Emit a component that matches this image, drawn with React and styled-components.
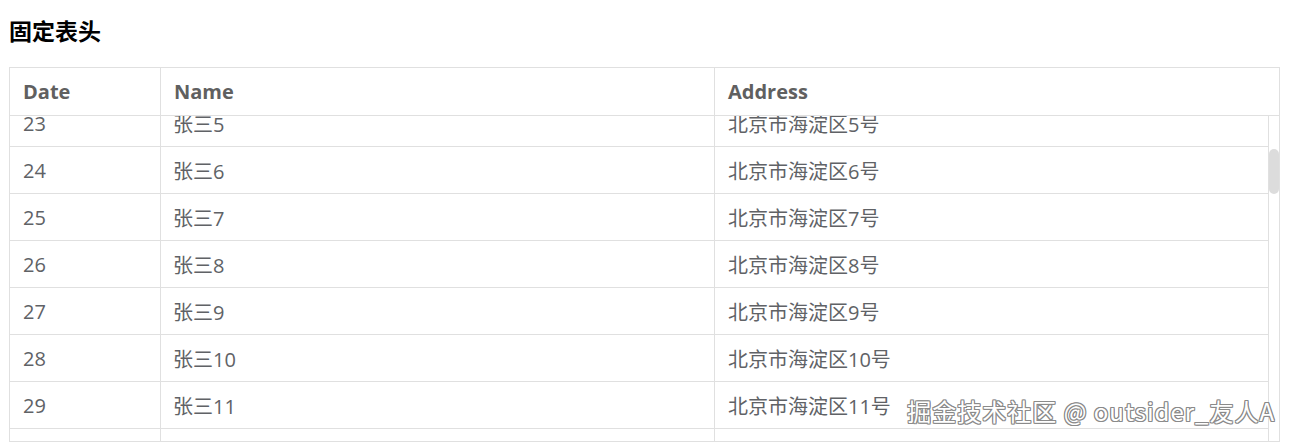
import styled, { createGlobalStyle } from "styled-components";
import { useLayoutEffect, useRef } from "react";

const GlobalStyle = createGlobalStyle`
  body {
    margin: 0;
    background: #fff;
    font-family: "Open Sans", "Noto Sans CJK SC", sans-serif;
  }
`;

const rows = Array.from({ length: 50 }, (_, i) => ({
  date: 18 + i,
  name: `张三${i}`,
  address: `北京市海淀区${i}号`,
}));

const App = () => {
  let bodyRef = useRef(null);

  // start the list scrolled a bit, like in the screenshot
  useLayoutEffect(() => {
    if (bodyRef.current) bodyRef.current.scrollTop = 251;
  }, []);

  return (
    <Page>
      <GlobalStyle />
      <Title>固定表头</Title>
      <Table>
        <HeadRow>
          <HeadCell $w="151px">Date</HeadCell>
          <HeadCell $w="554px">Name</HeadCell>
          <HeadCell $last>Address</HeadCell>
        </HeadRow>
        <BodyWrap>
          <Body ref={bodyRef}>
            {rows.map((r) => (
              <Row key={r.date}>
                <Cell $w="151px">{r.date}</Cell>
                <Cell $w="554px">{r.name}</Cell>
                <Cell $last>{r.address}</Cell>
              </Row>
            ))}
          </Body>
          <Gutter>
            <Thumb />
          </Gutter>
        </BodyWrap>
      </Table>
      <Watermark>掘金技术社区 @ outsider_友人A</Watermark>
    </Page>
  );
};

export default App;

let Page = styled.div`
  position: relative;
  padding: 0 10px 0 9px;
  height: 442px;
  box-sizing: border-box;
  overflow: hidden;
`;

let Title = styled.h3`
  margin: 0;
  padding: 14px 0 0 0;
  height: 50px;
  box-sizing: border-box;
  font-size: 23px;
  line-height: 32px;
  font-weight: 700;
  color: #000;
  font-family: "Noto Sans CJK SC", sans-serif;
`;

let Table = styled.div`
  border: 1px solid #e0e0e0;
  margin-top: 17px;
  display: flex;
  flex-direction: column;
  color: #606266;
`;

let HeadRow = styled.div`
  display: flex;
  height: 47px;
  border-bottom: 1px solid #e0e0e0;
`;

let HeadCell = styled.div`
  width: ${(p) => p.$w || "auto"};
  flex: ${(p) => (p.$last ? "1" : "none")};
  box-sizing: border-box;
  border-right: ${(p) => (p.$last ? "none" : "1px solid #e0e0e0")};
  padding-left: 13px;
  display: flex;
  align-items: center;
  font-size: 20px;
  font-weight: 700;
  color: #606060;
`;

let BodyWrap = styled.div`
  display: flex;
  height: 325px;
`;

let Body = styled.div`
  flex: 1;
  overflow-y: scroll;
  scrollbar-width: none;
  &::-webkit-scrollbar {
    display: none;
  }
`;

let Gutter = styled.div`
  width: 10px;
  flex: none;
  border-left: 1px solid #e0e0e0;
  padding-top: 33px;
  box-sizing: content-box;
`;

let Thumb = styled.div`
  width: 10px;
  height: 45px;
  border-radius: 5px;
  background: #dcdcdc;
`;

let Row = styled.div`
  display: flex;
  height: 47px;
  box-sizing: border-box;
  border-bottom: 1px solid #e0e0e0;
`;

let Cell = styled.div`
  width: ${(p) => p.$w || "auto"};
  flex: ${(p) => (p.$last ? "1" : "none")};
  box-sizing: border-box;
  border-right: ${(p) => (p.$last ? "none" : "1px solid #e0e0e0")};
  padding-left: ${(p) => (p.$w === "554px" ? "12px" : "13px")};
  display: flex;
  align-items: center;
  font-size: 20px;
  color: #606266;
`;

let Watermark = styled.div`
  position: absolute;
  right: 15px;
  bottom: 14px;
  font-size: 24px;
  letter-spacing: 1px;
  color: #fff;
  font-family: "Noto Sans CJK SC", sans-serif;
  text-shadow: 1px 0 #8a8a8a, -1px 0 #8a8a8a, 0 1px #8a8a8a, 0 -1px #8a8a8a,
    1px 1px #8a8a8a, -1px -1px #8a8a8a, 1px -1px #8a8a8a, -1px 1px #8a8a8a;
`;
